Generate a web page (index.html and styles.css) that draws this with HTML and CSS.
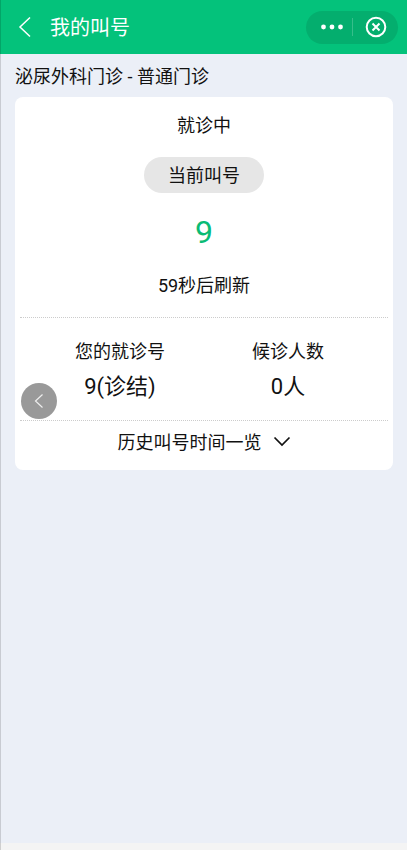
FILE: index.html
```html
<!DOCTYPE html>
<html lang="zh-CN">
<head>
<meta charset="utf-8">
<meta name="viewport" content="width=device-width, initial-scale=1">
<title>我的叫号</title>
<link rel="stylesheet" href="styles.css">
</head>
<body>
<header class="topbar">
  <button class="icon-button back" type="button" aria-label="返回">
    <svg width="14" height="22" viewBox="0 0 14 22"><path d="M12 1.5 2 11l10 9.5"/></svg>
  </button>
  <h1 class="topbar-title">我的叫号</h1>
  <div class="capsule">
    <button class="icon-button capsule-button more" type="button" aria-label="更多">
      <svg class="dots" width="24" height="6" viewBox="0 0 24 6"><circle cx="3.500" cy="3" r="2.4"/><circle cx="12" cy="3" r="2.4"/><circle cx="20.500" cy="3" r="2.4"/></svg>
    </button>
    <button class="icon-button capsule-button close" type="button" aria-label="关闭">
      <svg width="22" height="22" viewBox="0 0 22 22"><circle cx="11" cy="11" r="9.3"/><path d="m7.500 7.500 7 7m0-7-7 7"/></svg>
    </button>
  </div>
</header>
<main class="content">
  <h2 class="clinic">泌尿外科门诊 - 普通门诊</h2>
  <section class="card">
    <div class="current">
      <p class="status">就诊中</p>
      <p class="pill">当前叫号</p>
      <p class="number">9</p>
      <p class="refresh">59秒后刷新</p>
    </div>
    <dl class="stats">
      <div class="stat"><dt>您的就诊号</dt><dd>9(诊结)</dd></div>
      <div class="stat"><dt>候诊人数</dt><dd>0人</dd></div>
    </dl>
    <button class="history" type="button">
      <span>历史叫号时间一览</span>
      <svg width="18" height="12" viewBox="0 0 18 12"><path d="m1.500 1.500 7.500 7.500 7.500-7.500"/></svg>
    </button>
  </section>
</main>
<footer class="bottom"></footer>
<button class="floating" type="button" aria-label="后退">
  <svg width="10" height="16" viewBox="0 0 10 16"><path d="M8.500 1.500 1.500 8l7 6.500"/></svg>
</button>
</body>
</html>
```
FILE: styles.css
```css
* { box-sizing: border-box; }

body {
  margin: 0;
  min-height: 100vh;
  display: flex;
  flex-direction: column;
  position: relative;
  background: #ebeff7;
  color: #111;
  font: 18px/24px Roboto, "Noto Sans CJK SC", sans-serif;
}

body::before {
  content: "";
  position: absolute;
  inset: 0 auto 0 0;
  width: 1px;
  background: rgba(0, 0, 0, 0.15);
}

h1, h2, p, dl, dd { margin: 0; font-weight: 400; }

button {
  border: 0;
  padding: 0;
  background: none;
  color: inherit;
  font: inherit;
  cursor: pointer;
}

svg {
  display: block;
  fill: none;
  stroke: currentColor;
  stroke-width: 2;
}

.topbar {
  display: flex;
  align-items: center;
  height: 54px;
  padding: 0 9px 0 18px;
  background: #04c27b;
  color: #fff;
}

.icon-button {
  display: flex;
  align-items: center;
  justify-content: center;
}

.back svg { stroke-width: 1.5; }

.topbar-title {
  flex: 1;
  margin-left: 18px;
  padding-top: 2px;
  font-size: 20px;
}

.capsule {
  display: flex;
  align-items: center;
  height: 33px;
  border-radius: 17px;
  background: #04ae6e;
}

.capsule-button {
  width: 46px;
  height: 18px;
}

.more { padding-left: 5px; }

.close { border-left: 1px solid #36be8b; }

.dots {
  fill: currentColor;
  stroke: none;
}

.content {
  flex: 1;
  padding: 11px 14px 16px 15px;
}

.clinic { font-size: 18px; }

.card {
  margin-top: 8px;
  padding: 0 5px;
  border-radius: 8px;
  background: #fff;
}

.current {
  display: flex;
  flex-direction: column;
  align-items: center;
  padding: 17px 0 19px;
}

.pill {
  margin-top: 19px;
  padding: 7px 24px 5px;
  border-radius: 18px;
  background: #e6e6e6;
}

.number {
  margin-top: 19px;
  color: #0abb74;
  font-size: 32px;
  line-height: 40px;
}

.refresh { margin-top: 22px; }

.stats {
  display: grid;
  grid-template-columns: 1fr 1fr;
  padding: 22px 16px 18px;
  border: 1px dotted #ccc;
  border-width: 1px 0;
  text-align: center;
}

.stat dd {
  margin-top: 8px;
  font-size: 22px;
  line-height: 30px;
}

.history {
  display: flex;
  align-items: center;
  justify-content: center;
  gap: 11px;
  width: 100%;
  padding: 10px 0 15px;
}

.history svg {
  margin-bottom: 2px;
  stroke-width: 1.7;
}

.bottom {
  height: 7px;
  background: #f4f4f4;
}

.floating {
  position: absolute;
  top: 383px;
  left: 21px;
  display: flex;
  align-items: center;
  justify-content: center;
  width: 36px;
  height: 36px;
  border-radius: 50%;
  background: #999;
  color: #eee;
}

.floating svg { stroke-width: 1.2; }
```
